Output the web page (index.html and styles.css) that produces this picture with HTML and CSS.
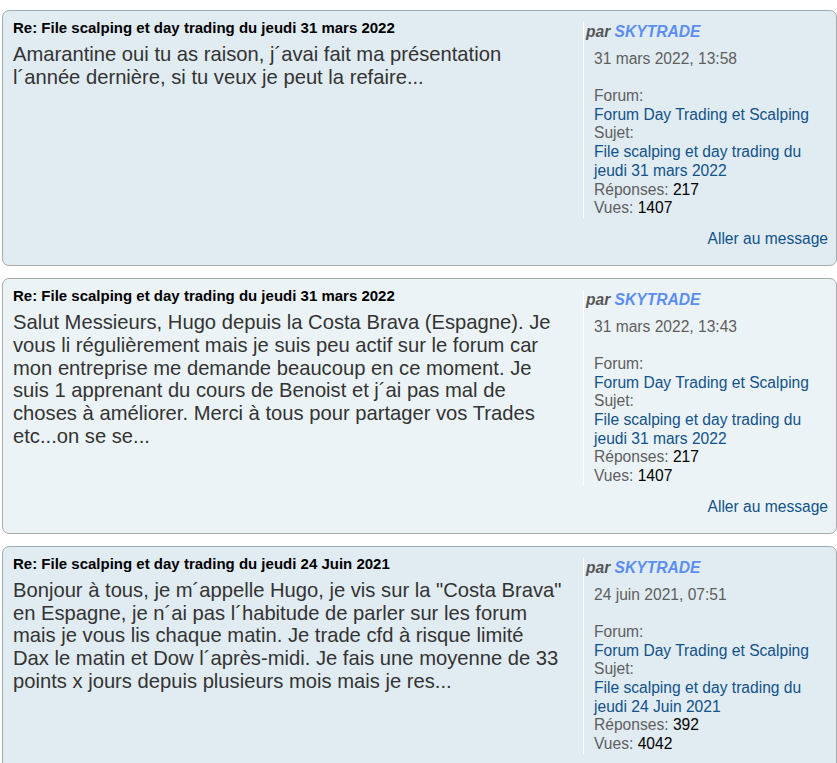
FILE: index.html
```html
<!DOCTYPE html>
<html lang="fr">
<head>
<meta charset="utf-8">
<title>Recherche</title>
<link rel="stylesheet" href="styles.css">
</head>
<body>
<div class="results">

  <div class="card bg2">
    <div class="inner">
      <div class="postbody">
        <h3 class="title">Re: File scalping et day trading du jeudi 31 mars 2022</h3>
        <div class="content">Amarantine oui tu as raison, j&#8288;´avai fait ma présentation l&#8288;´année dernière, si tu veux je peut la refaire...</div>
      </div>
      <dl class="profile">
        <dt class="author">par <a class="user" href="#">SKYTRADE</a></dt>
        <dd class="date">31 mars 2022, 13:58</dd>
        <dd>Forum:<br><a class="link" href="#">Forum Day Trading et Scalping</a></dd>
        <dd>Sujet:<br><a class="link" href="#">File scalping et day trading du jeudi 31 mars 2022</a></dd>
        <dd>Réponses: <strong class="num">217</strong></dd>
        <dd>Vues: <strong class="num">1407</strong></dd>
      </dl>
    </div>
    <div class="footer"><a class="link" href="#">Aller au message</a></div>
  </div>

  <div class="card bg1">
    <div class="inner">
      <div class="postbody">
        <h3 class="title">Re: File scalping et day trading du jeudi 31 mars 2022</h3>
        <div class="content">Salut Messieurs, Hugo depuis la Costa Brava (Espagne). Je vous li régulièrement mais je suis peu actif sur le forum car mon entreprise me demande beaucoup en ce moment. Je suis 1 apprenant du cours de Benoist et j&#8288;´ai pas mal de choses à améliorer. Merci à tous pour partager vos Trades etc...on se se...</div>
      </div>
      <dl class="profile">
        <dt class="author">par <a class="user" href="#">SKYTRADE</a></dt>
        <dd class="date">31 mars 2022, 13:43</dd>
        <dd>Forum:<br><a class="link" href="#">Forum Day Trading et Scalping</a></dd>
        <dd>Sujet:<br><a class="link" href="#">File scalping et day trading du jeudi 31 mars 2022</a></dd>
        <dd>Réponses: <strong class="num">217</strong></dd>
        <dd>Vues: <strong class="num">1407</strong></dd>
      </dl>
    </div>
    <div class="footer"><a class="link" href="#">Aller au message</a></div>
  </div>

  <div class="card bg2">
    <div class="inner">
      <div class="postbody">
        <h3 class="title">Re: File scalping et day trading du jeudi 24 Juin 2021</h3>
        <div class="content">Bonjour à tous, je m&#8288;´appelle Hugo, je vis sur la "Costa Brava" en Espagne, je n&#8288;´ai pas l&#8288;´habitude de parler sur les forum mais je vous lis chaque matin. Je trade cfd à risque limité Dax le matin et Dow l&#8288;´après-midi. Je fais une moyenne de 33 points x jours depuis plusieurs mois mais je res...</div>
      </div>
      <dl class="profile">
        <dt class="author">par <a class="user" href="#">SKYTRADE</a></dt>
        <dd class="date">24 juin 2021, 07:51</dd>
        <dd>Forum:<br><a class="link" href="#">Forum Day Trading et Scalping</a></dd>
        <dd>Sujet:<br><a class="link" href="#">File scalping et day trading du jeudi 24 Juin 2021</a></dd>
        <dd>Réponses: <strong class="num">392</strong></dd>
        <dd>Vues: <strong class="num">4042</strong></dd>
      </dl>
    </div>
    <div class="footer"><a class="link" href="#">Aller au message</a></div>
  </div>

</div>
</body>
</html>
```

FILE: styles.css
```css
html, body {
  margin: 0;
  padding: 0;
  background: #ffffff;
}

body {
  font-family: "Liberation Sans", Arial, sans-serif;
  color: #333333;
  overflow: hidden;
}

.results {
  padding: 10px 0 0 2px;
  display: flex;
  flex-direction: column;
  gap: 12px;
}

.card {
  border: 1px solid #a7abae;
  border-radius: 7px;
  padding: 8px 8px 17px 10px;
  width: 835px;
  box-sizing: border-box;
}

.bg1 { background: #ecf3f7; }
.bg2 { background: #e1ebf2; }

.inner {
  display: flex;
  align-items: flex-start;
}

.postbody {
  width: 552px;
  flex: none;
}

.title {
  margin: 0;
  font-size: 15px;
  line-height: 18px;
  font-weight: bold;
  color: #000000;
}

.content {
  margin-top: 6px;
  font-size: 20.2px;
  line-height: 22.8px;
  color: #333333;
}

.profile {
  margin: 3px 0 0 18px;
  padding: 0 0 0 2px;
  border-left: 1px solid #ffffff;
  font-size: 15.6px;
  line-height: 18.7px;
  color: #5e5e5e;
  flex: 1;
}

.profile dd {
  margin: 0 0 0 8px;
}

.author {
  font-weight: bold;
  font-style: italic;
  line-height: 20px;
  color: #555555;
}

.user {
  color: #5b8ef5;
  text-decoration: none;
}

.date {
  margin-top: 7px !important;
  margin-bottom: 19px !important;
  line-height: 19px;
}

.link {
  color: #105289;
  text-decoration: none;
}

.num {
  font-weight: normal;
  color: #000000;
}

.footer {
  margin-top: 11px;
  text-align: right;
  font-size: 15.6px;
  line-height: 19px;
}
```
